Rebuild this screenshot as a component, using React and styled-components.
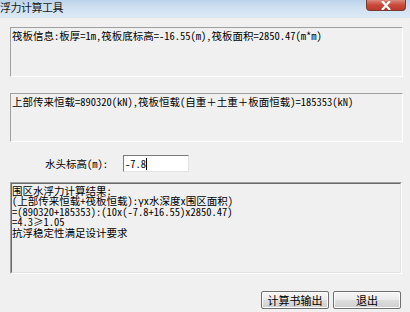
import React from "react";
import styled, { createGlobalStyle } from "styled-components";

const Global = createGlobalStyle`
  html, body { margin: 0; padding: 0; background: #f0f0f0; }
  body { width: 410px; height: 312px; overflow: hidden; }
`;

const CJK = `"Noto Sans Mono CJK SC", "Noto Sans CJK SC", "Liberation Mono", monospace`;

const Window = styled.div`
  width: 410px;
  height: 312px;
  background: #f0f0f0;
  display: flex;
  flex-direction: column;
  font-family: ${CJK};
  color: #000;
  overflow: hidden;
`;

const TitleBar = styled.div`
  height: 17px;
  flex: none;
  display: flex;
  justify-content: space-between;
  align-items: flex-start;
  background: linear-gradient(180deg, #bcd3ea 0%, #cfe0f1 45%, #dce9f5 100%);
  border-bottom: 1px solid #dfe8f1;
`;

const Title = styled.div`
  font-family: "Noto Sans CJK SC", sans-serif;
  font-size: 11px;
  line-height: 15px;
  color: #1a1a1a;
  padding-left: 0;
  letter-spacing: -0.5px;
`;

const CloseButton = styled.div`
  width: 38px;
  height: 10px;
  margin-right: 4px;
  background: linear-gradient(180deg, #d98a7c 0%, #c9493a 50%, #b83a2c 100%);
  border: 1px solid #7a3a32;
  border-top: none;
  border-radius: 0 0 4px 4px;
  display: flex;
  justify-content: center;
  align-items: flex-end;
`;

const Body = styled.div`
  flex: 1;
  display: flex;
  flex-direction: column;
  padding: 9px 7px 0 10px;
`;

const InfoBox = styled.div`
  height: ${(p) => p.$h}px;
  margin-bottom: ${(p) => p.$mb}px;
  box-sizing: border-box;
  border-top: 1px solid #a0a0a0;
  border-left: 1px solid #a0a0a0;
  border-right: 1px solid #ffffff;
  border-bottom: 1px solid #ffffff;
  background: #f0f0f0;
  font-size: 10.5px;
  line-height: 12px;
  padding: 2px 1px;
  white-space: pre;
`;

const ResultBox = styled.div`
  height: 92px;
  box-sizing: border-box;
  border: 1px solid;
  border-color: #a0a0a0 #ffffff #ffffff #a0a0a0;
  background: #f0f0f0;
  margin-right: 1px;
`;

const ResultInner = styled.div`
  height: 100%;
  box-sizing: border-box;
  border: 1px solid;
  border-color: #696969 #e3e3e3 #e3e3e3 #696969;
  font-size: 10.5px;
  line-height: 10.4px;
  padding: 2px 1px 0 0;
  white-space: pre;
`;

const HeadRow = styled.div`
  display: flex;
  align-items: center;
  height: 17px;
  margin: 0 0 10px 35px;
`;

const Label = styled.span`
  font-size: 10.5px;
  width: 78px;
`;

const Field = styled.div`
  width: 66px;
  height: 17px;
  box-sizing: border-box;
  background: #fff;
  border: 1px solid;
  border-color: #7a7a7a #e3e3e3 #e3e3e3 #7a7a7a;
  font-size: 10.5px;
  line-height: 14px;
  padding-left: 1px;
  display: flex;
  align-items: center;
`;

const Caret = styled.span`
  display: inline-block;
  width: 1px;
  height: 12px;
  background: #000;
  margin-left: 0;
`;

const ButtonRow = styled.div`
  display: flex;
  justify-content: flex-end;
  gap: 4px;
  margin-top: 17px;
  margin-right: 2px;
`;

const Button = styled.button`
  width: 68px;
  height: 18px;
  box-sizing: border-box;
  padding: 0;
  font-family: "Noto Sans CJK SC", sans-serif;
  font-size: 11px;
  line-height: 14px;
  color: #000;
  background: linear-gradient(180deg, #f6f6f6 0%, #ebebeb 48%, #dddddd 52%, #cfcfcf 100%);
  border: 1px solid #707070;
  border-radius: 2px;
  box-shadow: inset 0 0 0 1px #fcfcfc;
`;

export default function App() {
  return (
    <Window>
      <Global />
      <TitleBar>
        <Title>浮力计算工具</Title>
        <CloseButton>
          <svg width="12" height="9" viewBox="0 0 12 9">
            <path d="M2 0 L10 9 M10 0 L2 9" stroke="#fff" strokeWidth="2.2" />
          </svg>
        </CloseButton>
      </TitleBar>
      <Body>
        <InfoBox $h={50} $mb={16}>
          {"筏板信息:板厚=1m,筏板底标高=-16.55(m),筏板面积=2850.47(m*m)"}
        </InfoBox>
        <InfoBox $h={49} $mb={13}>
          {"上部传来恒载=890320(kN),筏板恒载(自重＋土重＋板面恒载)=185353(kN)"}
        </InfoBox>
        <HeadRow>
          <Label>水头标高(m):</Label>
          <Field>
            -7.8
            <Caret />
          </Field>
        </HeadRow>
        <ResultBox>
          <ResultInner>
            {"围区水浮力计算结果:\n(上部传来恒载+筏板恒载):γx水深度x围区面积)\n=(890320+185353):(10x(-7.8+16.55)x2850.47)\n=4.3≥1.05\n抗浮稳定性满足设计要求"}
          </ResultInner>
        </ResultBox>
        <ButtonRow>
          <Button>计算书输出</Button>
          <Button>退出</Button>
        </ButtonRow>
      </Body>
    </Window>
  );
}
